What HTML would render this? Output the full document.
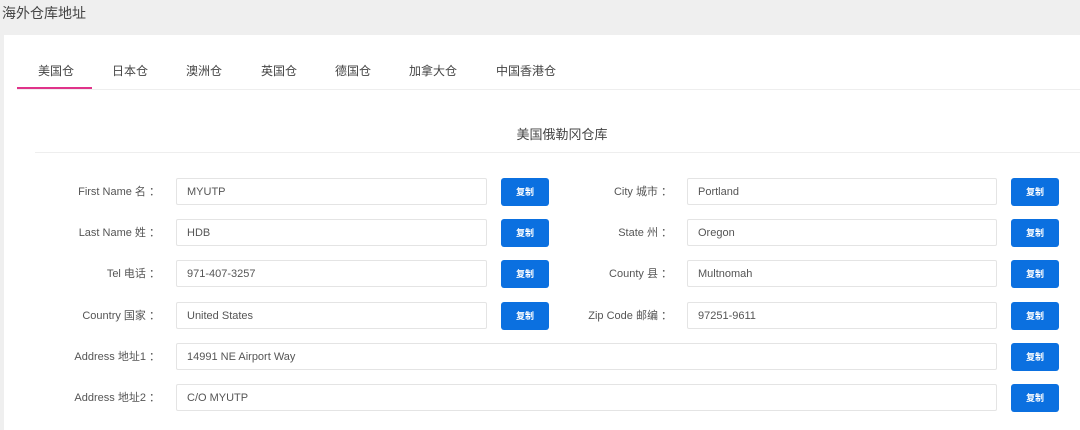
<!DOCTYPE html><html><head><meta charset="utf-8"><style>
*{margin:0;padding:0;box-sizing:border-box}
body{width:1080px;height:430px;background:#efefef;font-family:"Liberation Sans","Noto Sans CJK SC",sans-serif;position:relative;overflow:hidden;color:#555}
.t{position:absolute;left:2px;top:3px;font-size:14px;color:#444}
.card{position:absolute;left:4px;top:35px;width:1076px;height:395px;background:#fff}
.tab{position:absolute;top:62px;font-size:12px;color:#444}
.ul{position:absolute;left:17px;top:87px;width:75px;height:2px;background:#e0338a}
.tl{position:absolute;left:17px;top:89px;width:1063px;height:1px;background:#eee}
.h{position:absolute;left:0;width:1124px;text-align:center;top:124px;font-size:13px;color:#444}
.hl{position:absolute;left:35px;top:152px;width:1045px;height:1px;background:#eee}
.lb{position:absolute;font-size:11px;color:#555;text-align:right;width:200px}
.in{position:absolute;height:27px;border:1px solid #e4e4e4;border-radius:2px;font-size:11px;color:#555;padding:7px 10px}
.b{position:absolute;width:48px;height:28px;background:#0b70e0;border-radius:3px;color:#fff;font-size:9px;text-align:center;line-height:28px;font-weight:bold}
</style></head><body>
<div class="t">海外仓库地址</div>
<div class="card"></div>
<div class="tab" style="left:38px">美国仓</div>
<div class="tab" style="left:112px">日本仓</div>
<div class="tab" style="left:186px">澳洲仓</div>
<div class="tab" style="left:261px">英国仓</div>
<div class="tab" style="left:335px">德国仓</div>
<div class="tab" style="left:409px">加拿大仓</div>
<div class="tab" style="left:496px">中国香港仓</div>
<div class="ul"></div><div class="tl"></div>
<div class="h">美国俄勒冈仓库</div><div class="hl"></div>

<div class="lb" style="left:-40px;top:183px">First Name 名 ：</div>
<div class="in" style="left:176px;top:178px;width:311px">MYUTP</div><div class="b" style="left:501px;top:178px">复制</div>
<div class="lb" style="left:-40px;top:224px">Last Name 姓 ：</div>
<div class="in" style="left:176px;top:219px;width:311px">HDB</div><div class="b" style="left:501px;top:219px">复制</div>
<div class="lb" style="left:-40px;top:265px">Tel 电话 ：</div>
<div class="in" style="left:176px;top:260px;width:311px">971-407-3257</div><div class="b" style="left:501px;top:260px">复制</div>
<div class="lb" style="left:-40px;top:307px">Country 国家 ：</div>
<div class="in" style="left:176px;top:302px;width:311px">United States</div><div class="b" style="left:501px;top:302px">复制</div>
<div class="lb" style="left:-40px;top:348px">Address 地址1 ：</div>
<div class="in" style="left:176px;top:343px;width:821px">14991 NE Airport Way</div><div class="b" style="left:1011px;top:343px">复制</div>
<div class="lb" style="left:-40px;top:389px">Address 地址2 ：</div>
<div class="in" style="left:176px;top:384px;width:821px">C/O MYUTP</div><div class="b" style="left:1011px;top:384px">复制</div>

<div class="lb" style="left:472px;top:183px">City 城市 ：</div>
<div class="in" style="left:687px;top:178px;width:310px">Portland</div><div class="b" style="left:1011px;top:178px">复制</div>
<div class="lb" style="left:472px;top:224px">State 州 ：</div>
<div class="in" style="left:687px;top:219px;width:310px">Oregon</div><div class="b" style="left:1011px;top:219px">复制</div>
<div class="lb" style="left:472px;top:265px">County 县 ：</div>
<div class="in" style="left:687px;top:260px;width:310px">Multnomah</div><div class="b" style="left:1011px;top:260px">复制</div>
<div class="lb" style="left:472px;top:307px">Zip Code 邮编 ：</div>
<div class="in" style="left:687px;top:302px;width:310px">97251-9611</div><div class="b" style="left:1011px;top:302px">复制</div>
</body></html>
